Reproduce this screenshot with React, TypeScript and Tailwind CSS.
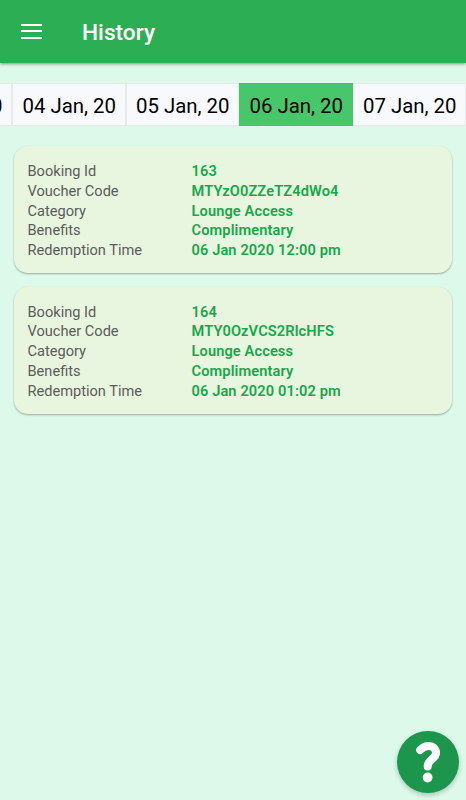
import { twMerge } from 'tailwind-merge';

const dates = ['03 Jan, 20', '04 Jan, 20', '05 Jan, 20', '06 Jan, 20', '07 Jan, 20'];
const selectedDate = '06 Jan, 20';

const bookings = [
  {
    'Booking Id': '163',
    'Voucher Code': 'MTYzO0ZZeTZ4dWo4',
    Category: 'Lounge Access',
    Benefits: 'Complimentary',
    'Redemption Time': '06 Jan 2020 12:00 pm',
  },
  {
    'Booking Id': '164',
    'Voucher Code': 'MTY0OzVCS2RlcHFS',
    Category: 'Lounge Access',
    Benefits: 'Complimentary',
    'Redemption Time': '06 Jan 2020 01:02 pm',
  },
];

function Header() {
  return (
    <header className="flex h-[63px] shrink-0 items-center bg-[#2cae54] pl-[21px] text-white shadow-[0_1px_3px_rgba(0,0,0,0.4)]">
      <button aria-label="Open menu" className="mr-10 -mt-px flex w-[21px] flex-col gap-[4.5px]">
        <span className="h-[2px] w-full bg-white" />
        <span className="h-[2px] w-full bg-white" />
        <span className="h-[2px] w-full bg-white" />
      </button>
      <h1 className="pt-[3px] text-[22.7px] leading-none font-medium">History</h1>
    </header>
  );
}

function DateStrip() {
  return (
    <div className="mt-5 flex h-[43px] shrink-0 justify-end overflow-hidden">
      {dates.map((date) => (
        <button
          key={date}
          className={twMerge(
            'flex w-[113.5px] shrink-0 items-center justify-center border border-[#e9e9e9] bg-[#f8f9fc] pt-[3px] pl-px text-[20.4px] whitespace-nowrap text-black',
            date === selectedDate && 'border-[#48c76a] bg-[#48c76a]'
          )}
        >
          {date}
        </button>
      ))}
    </div>
  );
}

function BookingCard({ booking }: { booking: Record<string, string> }) {
  return (
    <dl className="h-[126.7px] rounded-[14px] bg-[#e8f6df] pt-[15.7px] pl-[14px] text-[14.6px] leading-[19.8px] shadow-[0_1px_2px_rgba(0,0,0,0.32)]">
      {Object.entries(booking).map(([label, value]) => (
        <div key={label} className="flex">
          <dt className="w-[164px] text-[#5c5c5c]">{label}</dt>
          <dd className="font-semibold tracking-[0.12px] text-[#16a849]">{value}</dd>
        </div>
      ))}
    </dl>
  );
}

export default function App() {
  return (
    <main className="flex h-screen flex-col overflow-hidden bg-[#dcf9ea] font-[Roboto,sans-serif]">
      <Header />
      <DateStrip />
      <div className="flex flex-col gap-[13.8px] pt-[20.4px] pr-[14px] pl-[13.5px]">
        {bookings.map((booking) => (
          <BookingCard key={booking['Booking Id']} booking={booking} />
        ))}
      </div>

      {/* Floating help button */}
      <button
        aria-label="Help"
        className="fixed top-[731px] left-[397px] size-[62px] rounded-full bg-[#1b964c] shadow-[0_2px_5px_rgba(0,0,0,0.22)]"
      >
        <svg viewBox="0 0 62 62" className="size-full" fill="none">
          <path
            d="M23.2 19C26 16 28.5 15 31.5 15C36 15 39 18 39 22C39 28 30.7 28.5 30.7 35.4"
            stroke="white"
            strokeWidth="8"
            strokeLinecap="round"
            strokeLinejoin="round"
          />
          <circle cx="30.6" cy="46.5" r="4.9" fill="white" />
        </svg>
      </button>
    </main>
  );
}
